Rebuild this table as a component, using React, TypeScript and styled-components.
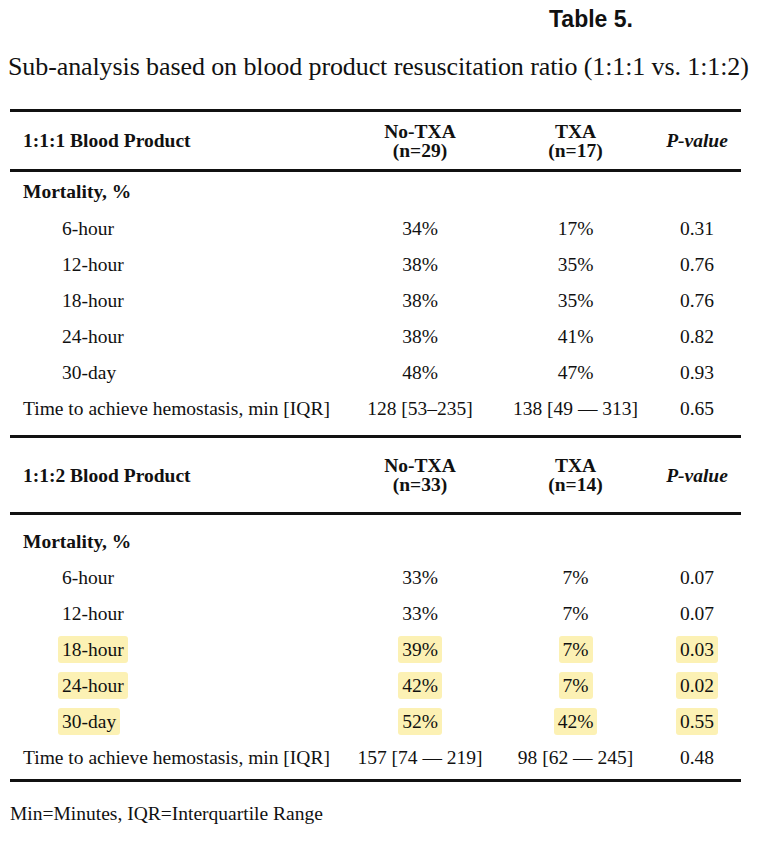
import React from "react";
import styled, { createGlobalStyle } from "styled-components";

const Global = createGlobalStyle`
  html, body { margin: 0; padding: 0; background: #fff; }
  body { font-family: "Liberation Serif", "Times New Roman", serif; color: #111; }
`;

const Page = styled.div`
  width: 766px;
  padding-top: 7px;
  box-sizing: border-box;
`;

const Title = styled.div`
  font-family: "Liberation Sans", Arial, sans-serif;
  font-weight: bold;
  font-size: 23px;
  line-height: 24px;
  padding-left: 549px;
`;

const Subtitle = styled.div`
  font-size: 26px;
  line-height: 30px;
  margin-top: 21px;
  padding-left: 8px;
  white-space: nowrap;
  letter-spacing: -0.1px;
`;

const Table = styled.div`
  margin: 27px 0 0 10px;
  width: 731px;
  border-top: 3px solid #111;
`;

const Section = styled.div`
  border-bottom: 3px solid #111;
`;

const Row = styled.div<{ $h?: number; $pt?: number; $pb?: number }>`
  display: grid;
  grid-template-columns: 332px 156px 155px 88px;
  align-items: center;
  height: ${(p) => p.$h ?? 36}px;
  padding-top: ${(p) => p.$pt ?? 0}px;
  padding-bottom: ${(p) => p.$pb ?? 0}px;
  font-size: 19.5px;
`;

const HeadRow = styled(Row)`
  border-bottom: 3px solid #111;
  font-weight: bold;
`;

const Cell = styled.div<{ $indent?: boolean; $left?: boolean }>`
  text-align: ${(p) => (p.$left ? "left" : "center")};
  padding-left: ${(p) => (p.$indent ? 52 : p.$left ? 13 : 0)}px;
  line-height: 19px;
  white-space: nowrap;
`;

const Italic = styled.span`
  font-style: italic;
`;

const Mark = styled.span<{ $on?: boolean }>`
  background: ${(p) => (p.$on ? "#fcf1b4" : "transparent")};
  border-radius: 3px;
  padding: 3px 4px;
  margin: 0 -4px;
`;

const Footnote = styled.div`
  font-size: 19.5px;
  line-height: 22px;
  margin-top: 21px;
  padding-left: 10px;
`;

type DataRow = { label: string; a: string; b: string; p: string; hl?: boolean };

const sec1: DataRow[] = [
  { label: "6-hour", a: "34%", b: "17%", p: "0.31" },
  { label: "12-hour", a: "38%", b: "35%", p: "0.76" },
  { label: "18-hour", a: "38%", b: "35%", p: "0.76" },
  { label: "24-hour", a: "38%", b: "41%", p: "0.82" },
  { label: "30-day", a: "48%", b: "47%", p: "0.93" },
];

const sec2: DataRow[] = [
  { label: "6-hour", a: "33%", b: "7%", p: "0.07" },
  { label: "12-hour", a: "33%", b: "7%", p: "0.07" },
  { label: "18-hour", a: "39%", b: "7%", p: "0.03", hl: true },
  { label: "24-hour", a: "42%", b: "7%", p: "0.02", hl: true },
  { label: "30-day", a: "52%", b: "42%", p: "0.55", hl: true },
];

type SectionProps = {
  title: string;
  nA: string;
  nB: string;
  headH: number;
  mortPt: number;
  mortH: number;
  rows: DataRow[];
  time: [string, string, string];
  tailPb: number;
};

function TableSection({ title, nA, nB, headH, mortPt, mortH, rows, time, tailPb }: SectionProps) {
  return (
    <Section>
      <HeadRow $h={headH}>
        <Cell $left>{title}</Cell>
        <Cell>
          No-TXA
          <br />
          (n={nA})
        </Cell>
        <Cell>
          TXA
          <br />
          (n={nB})
        </Cell>
        <Cell>
          <Italic>P-value</Italic>
        </Cell>
      </HeadRow>
      <Row $h={mortH} $pt={mortPt}>
        <Cell $left>
          <b>Mortality, %</b>
        </Cell>
      </Row>
      {rows.map((r) => (
        <Row key={r.label}>
          <Cell $left $indent>
            <Mark $on={r.hl}>{r.label}</Mark>
          </Cell>
          <Cell>
            <Mark $on={r.hl}>{r.a}</Mark>
          </Cell>
          <Cell>
            <Mark $on={r.hl}>{r.b}</Mark>
          </Cell>
          <Cell>
            <Mark $on={r.hl}>{r.p}</Mark>
          </Cell>
        </Row>
      ))}
      <Row $pb={tailPb}>
        <Cell $left>Time to achieve hemostasis, min [IQR]</Cell>
        <Cell>{time[0]}</Cell>
        <Cell>{time[1]}</Cell>
        <Cell>{time[2]}</Cell>
      </Row>
    </Section>
  );
}

export default function App() {
  return (
    <Page>
      <Global />
      <Title>Table 5.</Title>
      <Subtitle>Sub-analysis based on blood product resuscitation ratio (1:1:1 vs. 1:1:2)</Subtitle>
      <Table>
        <TableSection
          title="1:1:1 Blood Product"
          nA="29"
          nB="17"
          headH={57}
          mortPt={0}
          mortH={38}
          rows={sec1}
          time={["128 [53–235]", "138 [49 — 313]", "0.65"]}
          tailPb={9}
        />
        <TableSection
          title="1:1:2 Blood Product"
          nA="33"
          nB="14"
          headH={74}
          mortPt={8}
          mortH={36}
          rows={sec2}
          time={["157 [74 — 219]", "98 [62 — 245]", "0.48"]}
          tailPb={4}
        />
      </Table>
      <Footnote>Min=Minutes, IQR=Interquartile Range</Footnote>
    </Page>
  );
}
